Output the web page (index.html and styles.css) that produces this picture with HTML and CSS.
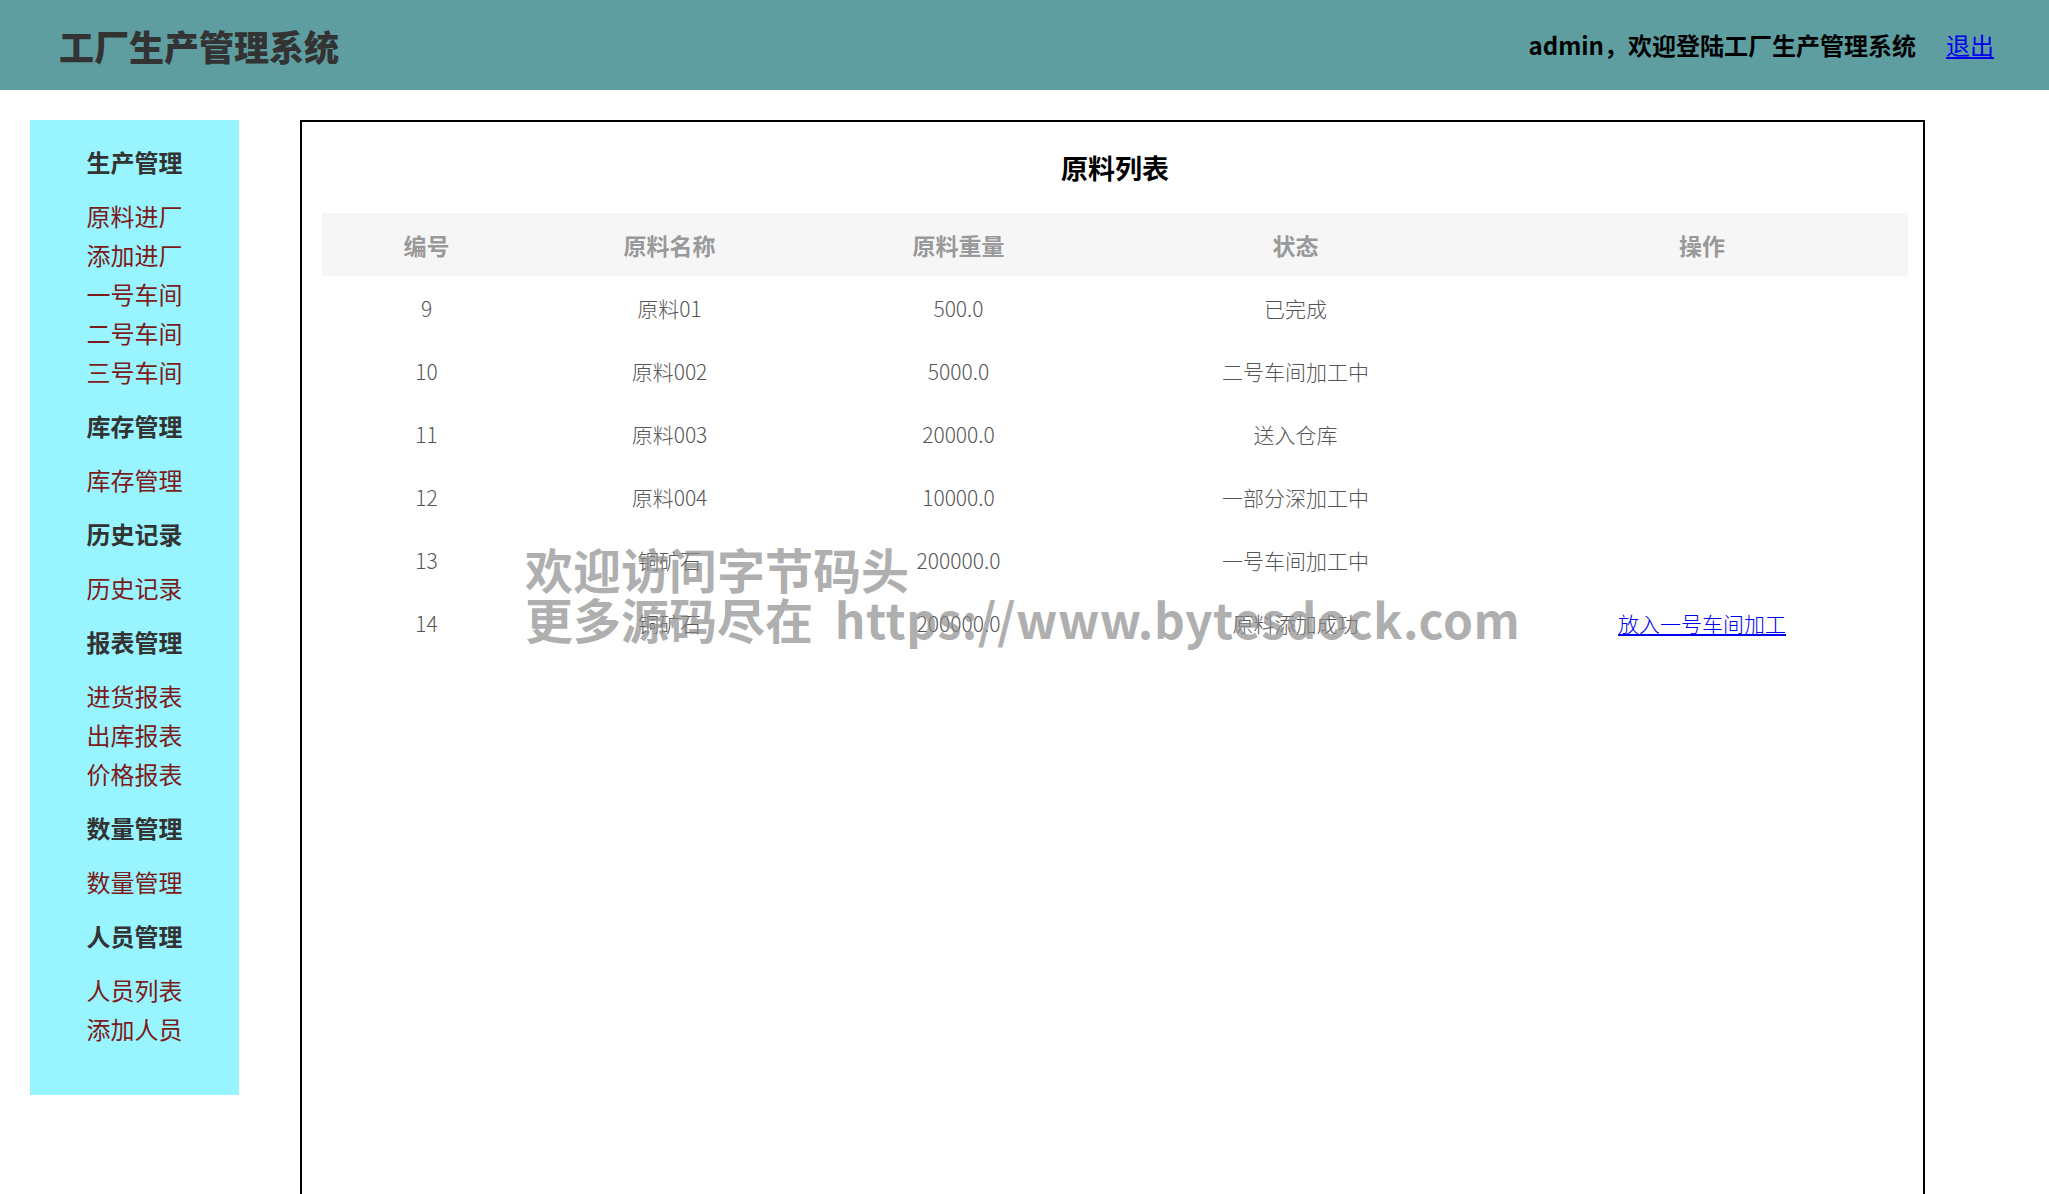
FILE: index.html
```html
<!DOCTYPE html>
<html lang="zh-CN">
<head>
    <meta charset="UTF-8">
    <title>工厂生产管理系统</title>
    <link rel="stylesheet" href="styles.css">
</head>
<body>
    <div class="header">
        <h1 class="logo">工厂生产管理系统</h1>
        <div class="user-info">
            <span class="welcome">admin，欢迎登陆工厂生产管理系统</span>
            <a href="#" class="logout">退出</a>
        </div>
    </div>

    <div class="main-container">
        <div class="side-menu">
            <div class="menu-group">
                <h3>生产管理</h3>
                <ul>
                    <li><a href="#">原料进厂</a></li>
                    <li><a href="#">添加进厂</a></li>
                    <li><a href="#">一号车间</a></li>
                    <li><a href="#">二号车间</a></li>
                    <li><a href="#">三号车间</a></li>
                </ul>
            </div>
            <div class="menu-group">
                <h3>库存管理</h3>
                <ul>
                    <li><a href="#">库存管理</a></li>
                </ul>
            </div>
            <div class="menu-group">
                <h3>历史记录</h3>
                <ul>
                    <li><a href="#">历史记录</a></li>
                </ul>
            </div>
            <div class="menu-group">
                <h3>报表管理</h3>
                <ul>
                    <li><a href="#">进货报表</a></li>
                    <li><a href="#">出库报表</a></li>
                    <li><a href="#">价格报表</a></li>
                </ul>
            </div>
            <div class="menu-group">
                <h3>数量管理</h3>
                <ul>
                    <li><a href="#">数量管理</a></li>
                </ul>
            </div>
            <div class="menu-group">
                <h3>人员管理</h3>
                <ul>
                    <li><a href="#">人员列表</a></li>
                    <li><a href="#">添加人员</a></li>
                </ul>
            </div>
        </div>

        <div class="content-box">
            <h2 class="list-title">原料列表</h2>
            <table class="data-table">
                <thead>
                    <tr>
                        <th class="col-id">编号</th>
                        <th class="col-name">原料名称</th>
                        <th class="col-weight">原料重量</th>
                        <th class="col-state">状态</th>
                        <th class="col-op">操作</th>
                    </tr>
                </thead>
                <tbody>
                    <tr><td>9</td><td>原料01</td><td>500.0</td><td>已完成</td><td class="col-op"></td></tr>
                    <tr><td>10</td><td>原料002</td><td>5000.0</td><td>二号车间加工中</td><td class="col-op"></td></tr>
                    <tr><td>11</td><td>原料003</td><td>20000.0</td><td>送入仓库</td><td class="col-op"></td></tr>
                    <tr><td>12</td><td>原料004</td><td>10000.0</td><td>一部分深加工中</td><td class="col-op"></td></tr>
                    <tr><td>13</td><td>铜矿石</td><td>200000.0</td><td>一号车间加工中</td><td class="col-op"></td></tr>
                    <tr><td>14</td><td>铜矿石</td><td>200000.0</td><td>原料添加成功</td><td class="col-op"><a href="#">放入一号车间加工</a></td></tr>
                </tbody>
            </table>

            <!-- watermark over the table -->
            <div class="watermark">
                欢迎访问字节码头<br>
                更多源码尽在&nbsp;&nbsp;<span class="wm-url">https://www.bytesdock.com</span>
            </div>
        </div>
    </div>
</body>
</html>
```

FILE: styles.css
```css
body {
    font-family: "Noto Sans CJK SC", "Noto Sans", sans-serif;
    margin: 0;
    padding: 0;
    background-color: #fff;
}

.header {
    display: flex;
    justify-content: space-between;
    align-items: center;
    height: 90px;
    padding: 0 55px 0 59px;
    background-color: #5f9ea0;
}

.logo {
    margin: 0;
    font-size: 35px;
    font-weight: 900;
    color: #333;
}

.user-info {
    display: flex;
    align-items: center;
    gap: 30px;
    font-size: 24px;
    margin-top: -2px;
}

.welcome {
    font-weight: bold;
    color: #000;
}

.logout {
    color: #0000ee;
}

.main-container {
    display: flex;
    align-items: flex-start;
    gap: 61px;
    padding: 30px 0 30px 30px;
}

.side-menu {
    width: 209px;
    padding: 22px 0 47px;
    background-color: #98f5ff;
    text-align: center;
}

.menu-group h3 {
    margin: 0 0 15px;
    font-size: 24px;
    line-height: 39px;
    color: #333;
}

.menu-group ul {
    list-style: none;
    margin: 0 0 15px;
    padding: 0;
}

.menu-group:last-child ul {
    margin-bottom: 0;
}

.menu-group li {
    font-size: 24px;
    line-height: 39px;
}

.menu-group a {
    color: #7d1a1a;
    text-decoration: none;
}

.content-box {
    position: relative;
    width: 1625px;
    min-height: 1200px;
    padding: 0 15px 0 20px;
    box-sizing: border-box;
    border: 2px solid #000;
}

.list-title {
    margin: 0;
    padding: 23px 0 23px;
    font-size: 27px;
    line-height: 45px;
    text-align: center;
    color: #000;
}

.data-table {
    width: 100%;
    border-collapse: collapse;
    table-layout: fixed;
}

.data-table th,
.data-table td {
    height: 63px;
    padding: 0;
    text-align: center;
}

.data-table th {
    background-color: #f6f6f6;
    font-size: 23px;
    font-weight: bold;
    color: #999;
}

.data-table td {
    font-size: 21px;
    font-weight: 300;
    color: #555;
}

.data-table td a {
    color: #0000ee;
}

.col-id { width: 209px; }
.col-name { width: 277px; }
.col-weight { width: 301px; }
.col-state { width: 373px; }

.data-table .col-op {
    padding-left: 14px;
}

.watermark {
    position: absolute;
    left: 223px;
    top: 421px;
    font-size: 48px;
    font-weight: bold;
    line-height: 50px;
    color: rgba(140, 140, 140, 0.7);
    white-space: nowrap;
    pointer-events: none;
}

.wm-url {
    letter-spacing: 0.5px;
}
```
